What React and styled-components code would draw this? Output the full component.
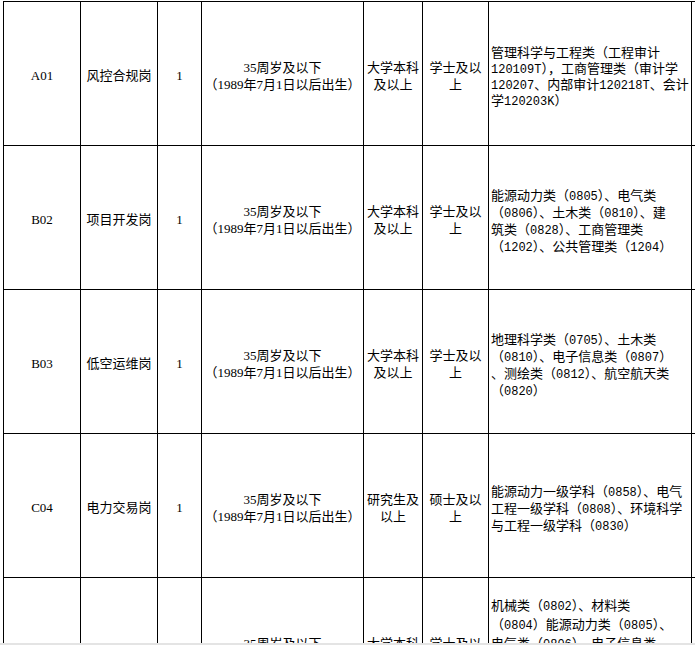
import React from 'react';
import styled, { createGlobalStyle } from 'styled-components';

const GlobalStyle = createGlobalStyle`
  html, body {
    margin: 0;
    padding: 0;
    background: #fff;
    overflow: hidden;
  }
  body {
    font-family: "Noto Sans CJK SC", sans-serif;
    color: #000;
  }
`;

const rows = [
  {
    code: 'A01',
    post: '风控合规岗',
    count: '1',
    age: ['35周岁及以下', '（1989年7月1日以后出生）'],
    edu: ['大学本科', '及以上'],
    degree: ['学士及以', '上'],
    major: [
      '管理科学与工程类（工程审计',
      '120109T），工商管理类（审计学',
      '120207、内部审计120218T、会计',
      '学120203K）',
    ],
    lh: 16,
  },
  {
    code: 'B02',
    post: '项目开发岗',
    count: '1',
    age: ['35周岁及以下', '（1989年7月1日以后出生）'],
    edu: ['大学本科', '及以上'],
    degree: ['学士及以', '上'],
    major: [
      '能源动力类（0805）、电气类',
      '（0806）、土木类（0810）、建',
      '筑类（0828）、工商管理类',
      '（1202）、公共管理类（1204）',
    ],
    lh: 17,
  },
  {
    code: 'B03',
    post: '低空运维岗',
    count: '1',
    age: ['35周岁及以下', '（1989年7月1日以后出生）'],
    edu: ['大学本科', '及以上'],
    degree: ['学士及以', '上'],
    major: [
      '地理科学类（0705）、土木类',
      '（0810）、电子信息类（0807）',
      '、测绘类（0812）、航空航天类',
      '（0820）',
    ],
    lh: 17,
  },
  {
    code: 'C04',
    post: '电力交易岗',
    count: '1',
    age: ['35周岁及以下', '（1989年7月1日以后出生）'],
    edu: ['研究生及', '以上'],
    degree: ['硕士及以', '上'],
    major: [
      '能源动力一级学科（0858）、电气',
      '工程一级学科（0808）、环境科学',
      '与工程一级学科（0830）',
    ],
    lh: 17,
  },
  {
    code: '',
    post: '',
    count: '',
    age: ['35周岁及以下', '（1989年7月1日以后出生）'],
    edu: ['大学本科', '及以上'],
    degree: ['学士及以', '上'],
    major: [
      '机械类（0802）、材料类',
      '（0804）能源动力类（0805）、',
      '电气类（0806）、电子信息类',
      '（0807）、自动化类（0808）、',
      '计算机类（0809）、土木类',
      '（0810）',
    ],
    lh: 19,
  },
];

const Sheet = styled.div`
  display: grid;
  grid-template-columns: 76px 76px 43px 161px 58px 65px 202px 60px;
  grid-auto-rows: 143px;
  gap: 1px;
  width: max-content;
  margin: 1px 0 0 3px;
  padding: 1px 0 0 1px;
  background: #000;
`;

const Cell = styled.div`
  display: flex;
  flex-direction: column;
  justify-content: center;
  align-items: ${p => (p.$left ? 'flex-start' : 'center')};
  padding: ${p => (p.$serif ? '6px' : '4px')} 0 0 ${p => (p.$left ? '2px' : '0')};
  background: #fff;
  font-family: ${p => (p.$serif ? '"Liberation Serif", "Noto Sans CJK SC", serif' : '"Noto Sans CJK SC", sans-serif')};
  font-size: 13px;
  line-height: ${p => p.$lh || 16.5}px;
  text-align: ${p => (p.$left ? 'left' : 'center')};
  overflow: hidden;
`;

const Line = styled.div`
  white-space: nowrap;
`;

const Code = styled.span`
  font-family: "Liberation Mono", monospace;
  font-size: 12px;
  line-height: 1;
`;

function MajorLine({ text }) {
  const parts = text.split(/([A-Za-z0-9]+)/).filter(Boolean);
  return (
    <Line>
      {parts.map((part, i) =>
        /^[A-Za-z0-9]+$/.test(part) ? <Code key={i}>{part}</Code> : <span key={i}>{part}</span>
      )}
    </Line>
  );
}

function Lines({ items }) {
  return items.map((t, i) => <Line key={i}>{t}</Line>);
}

function Row({ row }) {
  return (
    <>
      <Cell $serif>{row.code}</Cell>
      <Cell>{row.post}</Cell>
      <Cell $serif>{row.count}</Cell>
      <Cell $serif $lh={16.5}>
        <Lines items={row.age} />
      </Cell>
      <Cell $lh={16.5}>
        <Lines items={row.edu} />
      </Cell>
      <Cell $lh={16.5}>
        <Lines items={row.degree} />
      </Cell>
      <Cell $left $lh={row.lh}>
        {row.major.map((t, i) => (
          <MajorLine key={i} text={t} />
        ))}
      </Cell>
      <Cell />
    </>
  );
}

const ScrollEdge = styled.div`
  position: fixed;
  left: 0;
  right: 0;
  bottom: 0;
  height: 2px;
  background: #e4e4e4;
`;

export default function App() {
  return (
    <>
      <GlobalStyle />
      <Sheet>
        {rows.map((row, i) => (
          <Row key={i} row={row} />
        ))}
      </Sheet>
      <ScrollEdge />
    </>
  );
}
